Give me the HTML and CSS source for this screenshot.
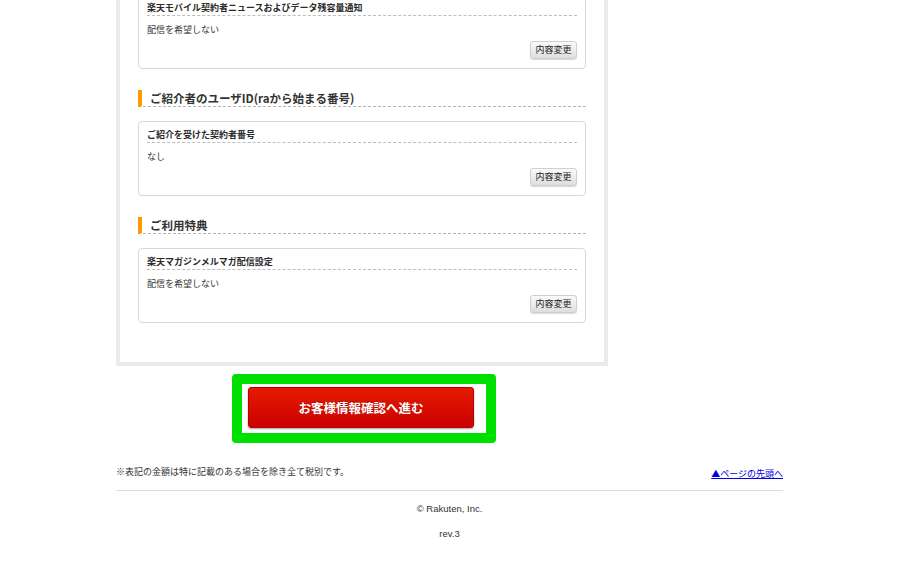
FILE: index.html
```html
<!DOCTYPE html>
<html lang="ja">
<head>
<meta charset="utf-8">
<title>お客様情報</title>
<link rel="stylesheet" href="styles.css">
</head>
<body>
<div class="page">
  <div class="panel">
    <div class="card">
      <div class="card-title">楽天モバイル契約者ニュースおよびデータ残容量通知</div>
      <div class="card-value">配信を希望しない</div>
      <div class="card-actions"><button class="edit-btn" type="button">内容変更</button></div>
    </div>

    <h2 class="section-heading">ご紹介者のユーザID(raから始まる番号)</h2>
    <div class="card">
      <div class="card-title">ご紹介を受けた契約者番号</div>
      <div class="card-value">なし</div>
      <div class="card-actions"><button class="edit-btn" type="button">内容変更</button></div>
    </div>

    <h2 class="section-heading">ご利用特典</h2>
    <div class="card">
      <div class="card-title">楽天マガジンメルマガ配信設定</div>
      <div class="card-value">配信を希望しない</div>
      <div class="card-actions"><button class="edit-btn" type="button">内容変更</button></div>
    </div>
  </div>

  <div class="highlight">
    <button class="submit-btn" type="button">お客様情報確認へ進む</button>
  </div>

  <div class="note-row">
    <p class="note">※表記の金額は特に記載のある場合を除き全て税別です。</p>
    <a class="top-link" href="#">▲ページの先頭へ</a>
  </div>
  <div class="footer">
    <p class="copyright">© Rakuten, Inc.</p>
    <p class="rev">rev.3</p>
  </div>
</div>
</body>
</html>
```

FILE: styles.css
```css
html, body {
  margin: 0;
  padding: 0;
  background: #fff;
}

body {
  font-family: "Noto Sans CJK JP", "Liberation Sans", sans-serif;
  color: #333;
  overflow: hidden;
}

.page {
  width: 667px;
  margin-left: 116px;
}

.panel {
  width: 492px;
  box-sizing: border-box;
  border: 4px solid #ebebeb;
  border-top: none;
  margin-top: -6px;
  padding: 0 18px 39px;
}

.card {
  border: 1px solid #d8d8d8;
  border-radius: 4px;
  padding: 7px 8px 9px;
  background: #fff;
}

.card-title {
  font-size: 9px;
  font-weight: bold;
  line-height: 12px;
  padding-bottom: 1px;
  border-bottom: 1px dashed #bdbdbd;
  color: #2b2b2b;
}

.card-value {
  font-size: 9px;
  line-height: 12px;
  margin-top: 8px;
  color: #333;
}

.card-actions {
  display: flex;
  justify-content: flex-end;
  margin-top: 5px;
}

.edit-btn {
  width: 47px;
  height: 18px;
  padding: 0;
  font-family: "Noto Sans CJK JP", sans-serif;
  font-size: 9px;
  line-height: 16px;
  color: #222;
  background: linear-gradient(#fafafa, #dedede);
  border: 1px solid #cfcfcf;
  border-radius: 3px;
  box-shadow: 0 1px 1px rgba(0, 0, 0, 0.15);
}

.section-heading {
  margin: 21px 0 14px;
  padding: 0 0 0 8px;
  border-left: 4px solid #f90;
  border-bottom: 1px dashed #b5b5b5;
  font-size: 11.5px;
  font-weight: bold;
  line-height: 16px;
  color: #333;
}

.highlight {
  width: 264px;
  box-sizing: border-box;
  margin: 8px 0 0 116px;
  border: 10px solid #00e000;
  border-radius: 4px;
  background: #fff;
  padding: 3px 12px 5px 6px;
}

.submit-btn {
  display: block;
  width: 226px;
  height: 41px;
  padding: 0;
  font-family: "Noto Sans CJK JP", sans-serif;
  font-size: 12.5px;
  font-weight: bold;
  color: #fff;
  background: linear-gradient(#e51a00, #cc0000);
  border: 1px solid #b80000;
  border-radius: 3px;
  box-shadow: 0 1px 2px rgba(0, 0, 0, 0.35);
  text-shadow: 0 -1px 0 rgba(0, 0, 0, 0.2);
}

.note-row {
  display: flex;
  justify-content: space-between;
  align-items: flex-start;
  margin-top: 22px;
  padding-bottom: 10px;
  border-bottom: 1px solid #dcdcdc;
}

.note {
  margin: 0;
  font-size: 9px;
  line-height: 13px;
  color: #333;
}

.top-link {
  margin-top: 2px;
  font-size: 9px;
  line-height: 13px;
  color: #0000e6;
  text-decoration: underline;
}

.footer {
  text-align: center;
  font-family: "Liberation Sans", "Noto Sans CJK JP", sans-serif;
  font-size: 9.5px;
  color: #333;
}

.copyright {
  margin: 11px 0 0;
  line-height: 13px;
}

.rev {
  margin: 12px 0 0;
  line-height: 13px;
}
```
